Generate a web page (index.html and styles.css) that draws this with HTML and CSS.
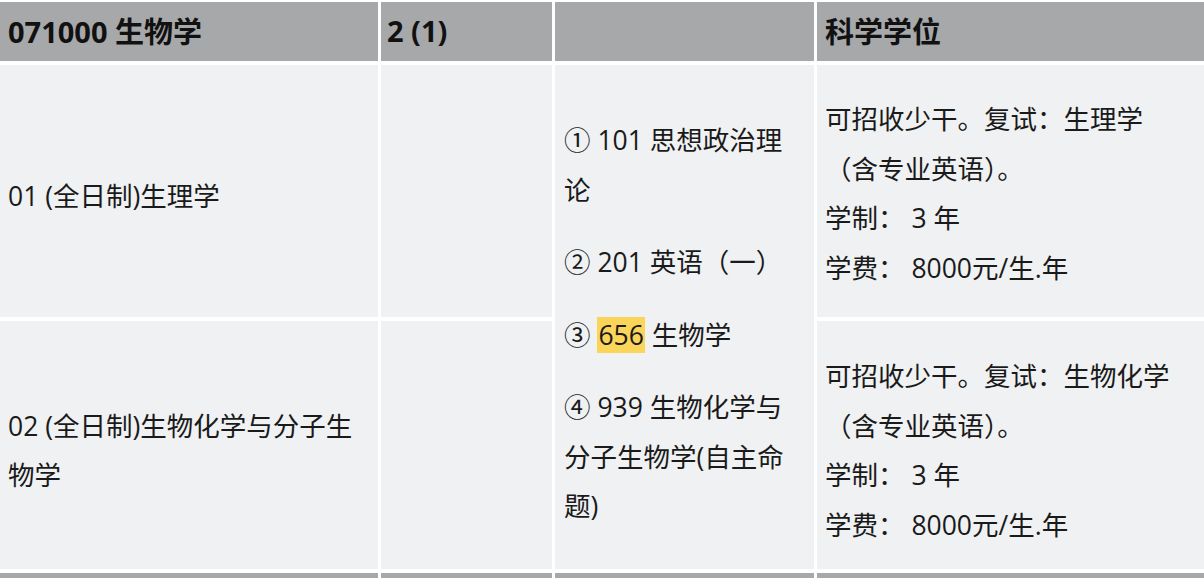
FILE: index.html
```html
<!DOCTYPE html>
<html lang="zh-CN">
<head>
<meta charset="utf-8">
<title>071000 生物学</title>
<link rel="stylesheet" href="styles.css">
</head>
<body>
<div class="table">
  <div class="cell head">071000 生物学</div>
  <div class="cell head">2 (1)</div>
  <div class="cell head"></div>
  <div class="cell head">科学学位</div>

  <div class="cell body c1 r1"><p>01 (全日制)生理学</p></div>
  <div class="cell body c2 r1"></div>
  <div class="cell body c3">
    <div class="exams">
      <p>① 101 思想政治理论</p>
      <p>② 201 英语（一）</p>
      <p>③ <mark class="hl">656</mark> 生物学</p>
      <p>④ 939 生物化学与分子生物学(自主命题)</p>
    </div>
  </div>
  <div class="cell body c4 r1">
    <div class="notes">
      <p>可招收少干。复试：生理学（含专业英语）。</p>
      <p>学制： 3 年</p>
      <p>学费： 8000元/生.年</p>
    </div>
  </div>

  <div class="cell body c1 r2"><p>02 (全日制)生物化学与分子生物学</p></div>
  <div class="cell body c2 r2"></div>
  <div class="cell body c4 r2">
    <div class="notes">
      <p>可招收少干。复试：生物化学（含专业英语）。</p>
      <p>学制： 3 年</p>
      <p>学费： 8000元/生.年</p>
    </div>
  </div>

  <div class="cell head next"></div>
  <div class="cell head next"></div>
  <div class="cell head next"></div>
  <div class="cell head next"></div>
</div>
</body>
</html>
```

FILE: styles.css
```css
html, body {
  margin: 0;
  padding: 0;
  background: #ffffff;
  overflow: hidden;
}

body {
  font-family: "Open Sans", "Noto Sans CJK SC", sans-serif;
  color: #1a1a1a;
}

.table {
  display: grid;
  grid-template-columns: 378px 171px 259px 390px;
  grid-template-rows: 59px 252px 248px 5px;
  gap: 4px 3px;
  padding-top: 2px;
  background: #ffffff;
}

.cell {
  box-sizing: border-box;
  padding: 0 8px;
  display: flex;
  align-items: center;
}

.cell p {
  margin: 0;
}

.head {
  background: #a7a8aa;
  font-weight: 700;
  font-size: 29px;
  color: #111111;
  padding-bottom: 3px;
}

.head:nth-child(2) {
  padding-left: 6px;
}

.body {
  background: #eff1f3;
  font-size: 26.5px;
  line-height: 49.5px;
}

.c1 { grid-column: 1; padding-right: 16px; }
.c2 { grid-column: 2; }
.c4 { grid-column: 4; }
.r1 { grid-row: 2; }
.r2 { grid-row: 3; }

.c1.r1 { padding-top: 12px; }
.c1.r2 { padding-top: 12px; }

.c3 {
  grid-column: 3;
  grid-row: 2 / 4;
  padding-left: 9px;
  padding-right: 20px;
  padding-top: 14px;
}

.exams {
  display: flex;
  flex-direction: column;
  gap: 23px;
}

.c4 {
  padding-left: 8px;
}

.notes {
  max-width: 350px;
}

.c4.r1 { padding-top: 6px; }
.c4.r2 { padding-top: 12px; }

.hl {
  background: #fbd45a;
  color: #1a1a1a;
  padding: 0 1px;
}
```
